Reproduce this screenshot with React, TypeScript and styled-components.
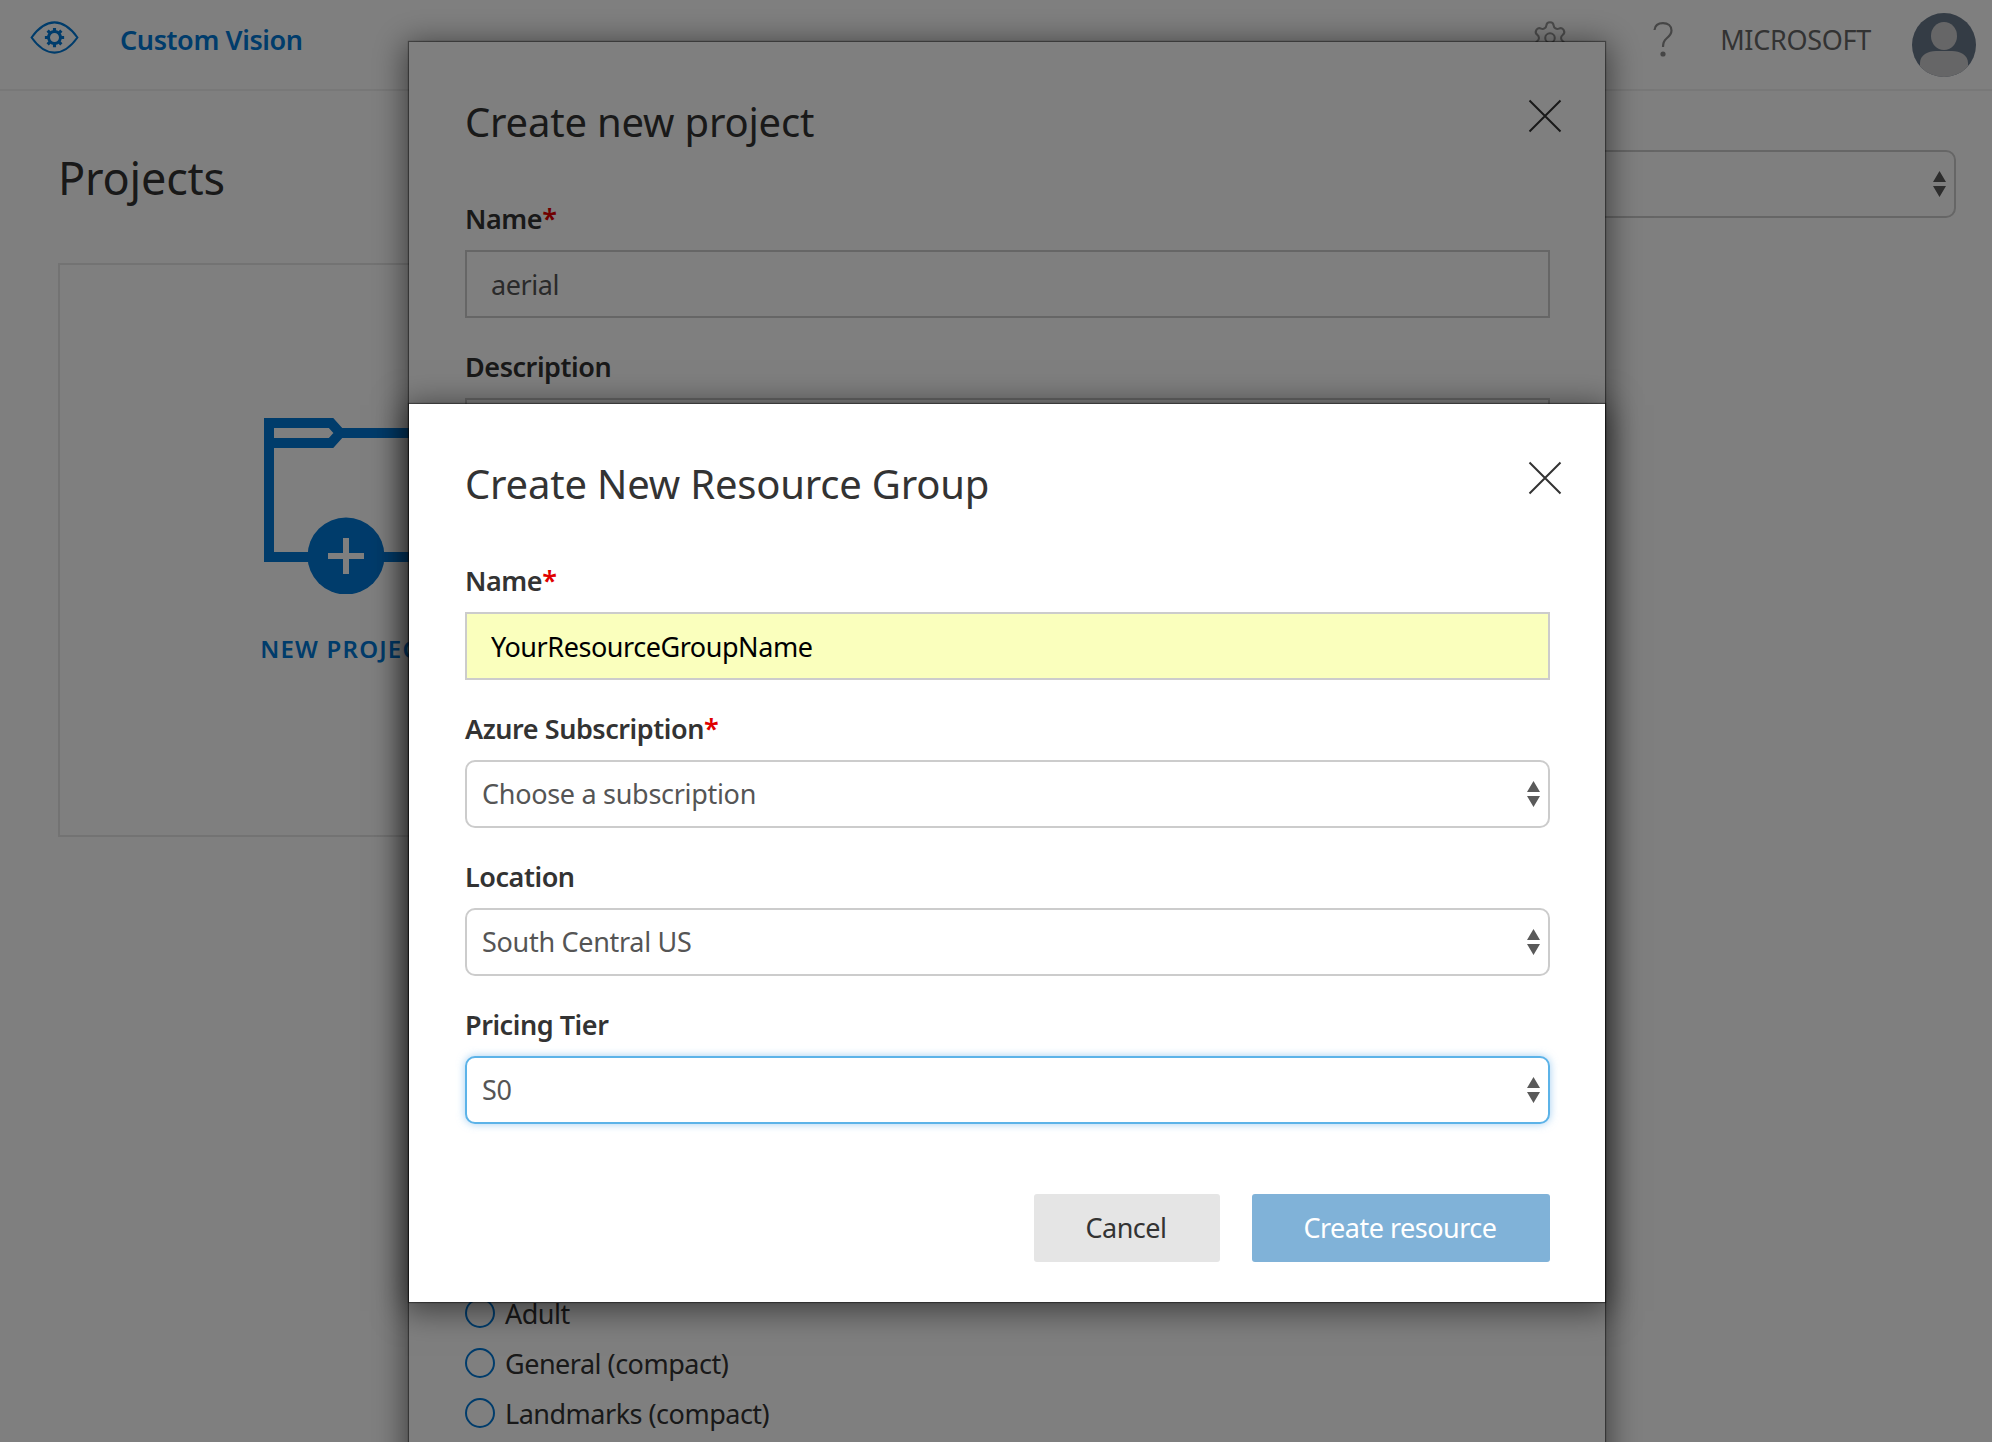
import React from 'react';
import styled, { createGlobalStyle } from 'styled-components';
import { Settings } from 'lucide-react';

const GlobalStyle = createGlobalStyle`
  html, body {
    margin: 0;
    padding: 0;
    background: #fff;
  }
  * {
    box-sizing: border-box;
  }
  body {
    font-family: "Noto Sans", "Open Sans", sans-serif;
    color: #333;
  }
`;

const Page = styled.div`
  position: relative;
  width: 1992px;
  height: 1442px;
  overflow: hidden;
  background: #fff;
`;

// 상단 바
const Header = styled.header`
  height: 91px;
  display: flex;
  align-items: center;
  padding: 0 16px 0 29px;
  border-bottom: 2px solid #f0f0f0;
`;
const LogoSlot = styled.div`
  display: flex;
  margin-bottom: 15px;
`;
const Brand = styled.div`
  font-size: 27px;
  font-weight: 600;
  color: #0078d7;
  margin: 0 0 10px 40px;
  letter-spacing: -0.4px;
  flex: 1;
`;
const GearSlot = styled.div`
  display: flex;
  color: #999;
  margin: 0 84px 13px 0;
`;
const HelpSlot = styled.div`
  display: flex;
  margin-bottom: 9px;
`;
const UserName = styled.div`
  font-size: 27px;
  color: #666;
  margin: 0 41px 10px 47px;
  letter-spacing: -0.3px;
`;

const Main = styled.main`
  padding: 0 36px 0 58px;
`;
const TitleRow = styled.div`
  display: flex;
  justify-content: space-between;
  align-items: center;
  height: 172px;
`;
const PageTitle = styled.h1`
  margin: 1px 0 0;
  font-size: 45px;
  font-weight: 400;
  color: #333;
  letter-spacing: -0.2px;
`;
const ToolbarSelect = styled.div`
  position: relative;
  width: 500px;
  margin-top: 14px;
`;
const Card = styled.div`
  width: 578px;
  height: 574px;
  border: 2px solid #e6e6e6;
  display: flex;
  flex-direction: column;
  align-items: center;
  padding-top: 153px;
`;
const CardLabel = styled.div`
  margin-top: 38px;
  font-size: 24px;
  font-weight: 600;
  letter-spacing: 1.2px;
  color: #0078d7;
  white-space: nowrap;
`;

// 모달 레이어
const ModalLayer = styled.div<{ $top: number }>`
  position: absolute;
  inset: 0;
  display: flex;
  align-items: flex-start;
  padding: ${props => props.$top}px 0 0 409px;
`;
const Backdrop = styled.div`
  position: absolute;
  inset: 0;
  background: rgba(0, 0, 0, 0.5);
`;
const Modal = styled.section<{ $bottomPad: number }>`
  position: relative;
  width: 1196px;
  flex: none;
  background: #fff;
  padding: 50px 55px ${props => props.$bottomPad}px 56px;
  box-shadow: 0 0 1px 1px rgba(0, 0, 0, 0.4), 0 5px 30px 4px rgba(0, 0, 0, 0.5);
`;
const ModalTitle = styled.h2`
  margin: 0 0 47px;
  font-size: 40px;
  line-height: 60px;
  font-weight: 400;
  color: #333;
  letter-spacing: -0.2px;
`;
const CloseButton = styled.button`
  position: absolute;
  top: 57px;
  right: 43px;
  width: 34px;
  height: 34px;
  padding: 0;
  border: none;
  background: none;
  color: #333;
  display: flex;
`;
const Field = styled.div`
  margin-bottom: 29px;
`;
const Label = styled.label`
  display: block;
  font-size: 27px;
  line-height: 40px;
  font-weight: 600;
  color: #333;
  margin-bottom: 11px;
  letter-spacing: -0.45px;
`;
const Required = styled.span`
  color: #e00000;
`;
const TextInput = styled.input<{ $filled?: boolean }>`
  display: block;
  width: 100%;
  height: 68px;
  padding: 1px 24px 0;
  border: 2px solid #ccc;
  border-radius: 0;
  outline: none;
  background: ${props => props.$filled ? '#faffbd' : '#fff'};
  color: ${props => props.$filled ? '#000' : '#555'};
  font-family: inherit;
  font-size: 27px;
  letter-spacing: -0.45px;
`;
const TextArea = styled.div`
  height: 90px;
  border: 2px solid #ccc;
`;
const SelectWrap = styled.div`
  position: relative;
`;
const Select = styled.select<{ $focused?: boolean }>`
  display: block;
  width: 100%;
  height: 68px;
  padding: 0 15px 2px;
  appearance: none;
  background: #fff;
  border: 2px solid ${props => props.$focused ? '#5cb3e8' : '#ccc'};
  border-radius: 10px;
  outline: none;
  box-shadow: ${props => props.$focused ? '0 0 8px rgba(102, 175, 233, 0.6)' : 'none'};
  color: #555;
  font-family: inherit;
  font-size: 27px;
  letter-spacing: -0.3px;
`;
const ArrowSlot = styled.span`
  position: absolute;
  top: 21px;
  right: 10px;
  display: flex;
  pointer-events: none;
`;
const Footer = styled.div`
  display: flex;
  justify-content: flex-end;
  gap: 32px;
  margin-top: 70px;
`;
const Button = styled.button<{ $primary?: boolean }>`
  height: 68px;
  width: ${props => props.$primary ? '298px' : '186px'};
  padding: 0 2px 2px 0;
  border: none;
  border-radius: 3px;
  background: ${props => props.$primary ? '#80b2d8' : '#e5e5e5'};
  color: ${props => props.$primary ? '#fff' : '#333'};
  font-family: inherit;
  font-size: 27px;
  letter-spacing: -0.5px;
`;
const RadioList = styled.div`
  display: flex;
  flex-direction: column;
  gap: 10px;
  margin-top: 805px;
`;
const RadioRow = styled.div`
  display: flex;
  align-items: center;
  height: 40px;
  gap: 10px;
  font-size: 27px;
  color: #333;
  letter-spacing: -0.5px;
`;
const RadioDot = styled.span`
  width: 30px;
  height: 30px;
  border: 2px solid #0078d7;
  border-radius: 50%;
`;

const Updown = () => (
  <svg width="13" height="26" viewBox="0 0 13 26">
    <path d="M6.5 0 L13 11 H0 Z M0 15 H13 L6.5 26 Z" fill="#5a5a5a" />
  </svg>
);

const CloseIcon = () => (
  <svg width="34" height="34" viewBox="0 0 34 34">
    <path d="M1.5 1.5 L32.5 32.5 M32.5 1.5 L1.5 32.5" stroke="currentColor" strokeWidth="2" fill="none" />
  </svg>
);

const EyeLogo = () => (
  <svg width="51" height="33" viewBox="0 0 53 36" fill="none" stroke="#0078d7">
    <path d="M1.5 18 C10 6 18 1.5 26.5 1.5 C35 1.5 43 6 51.5 18 C43 30 35 34.5 26.5 34.5 C18 34.5 10 30 1.5 18 Z" strokeWidth="2.2" />
    <circle cx="26.5" cy="18" r="6.5" strokeWidth="3.2" />
    <path d="M26.5 7.5 V11 M26.5 25 V28.5 M16 18 H19.5 M33.5 18 H37 M19 10.5 L21.5 13 M31.5 23 L34 25.5 M34 10.5 L31.5 13 M21.5 23 L19 25.5" strokeWidth="3.4" />
  </svg>
);

const HelpIcon = () => (
  <svg width="20" height="36" viewBox="0 0 20 36" fill="none">
    <path d="M1.5 8 C2 3.5 5.5 1.2 10 1.2 C15 1.2 18.5 4 18.5 8.5 C18.5 12.5 16 14.5 13.5 16.5 C11 18.5 10 20 10 25" stroke="#8c8c8c" strokeWidth="2.2" />
    <circle cx="10" cy="32" r="2.6" fill="#8c8c8c" />
  </svg>
);

const Avatar = () => (
  <svg width="64" height="64" viewBox="0 0 64 64">
    <defs>
      <clipPath id="avatarClip">
        <circle cx="32" cy="32" r="32" />
      </clipPath>
    </defs>
    <g clipPath="url(#avatarClip)">
      <rect width="64" height="64" fill="#68788a" />
      <ellipse cx="32" cy="23" rx="13" ry="14" fill="#cdcdcf" />
      <path d="M8 64 V50 C8 42 16 38 24 38 H40 C48 38 56 42 56 50 V64 Z" fill="#cdcdcf" />
    </g>
  </svg>
);

const FolderIcon = () => (
  <svg width="166" height="176" viewBox="0 0 166 176" fill="none">
    <path d="M5 25 H67 L76 15 L67 5 H5 Z" stroke="#0078d7" strokeWidth="10" />
    <path d="M5 25 V139 H161 V15 H76" stroke="#0078d7" strokeWidth="10" />
    <circle cx="82" cy="138" r="38.5" fill="#0078d7" />
    <path d="M64 138 H100 M82 120 V156" stroke="#fff" strokeWidth="6" />
  </svg>
);

const SelectField = ({ value, focused }: { value: string; focused?: boolean }) => (
  <SelectWrap>
    <Select $focused={focused} defaultValue={value}>
      <option>{value}</option>
    </Select>
    <ArrowSlot><Updown /></ArrowSlot>
  </SelectWrap>
);

const App = () => {
  return (
    <Page>
      <GlobalStyle />
      <Header>
        <LogoSlot><EyeLogo /></LogoSlot>
        <Brand>Custom Vision</Brand>
        <GearSlot><Settings size={38} strokeWidth={1.3} /></GearSlot>
        <HelpSlot><HelpIcon /></HelpSlot>
        <UserName>MICROSOFT</UserName>
        <Avatar />
      </Header>
      <Main>
        <TitleRow>
          <PageTitle>Projects</PageTitle>
          <ToolbarSelect>
            <Select />
            <ArrowSlot><Updown /></ArrowSlot>
          </ToolbarSelect>
        </TitleRow>
        <Card>
          <FolderIcon />
          <CardLabel>NEW PROJECT</CardLabel>
        </Card>
      </Main>

      <ModalLayer $top={42}>
        <Modal $bottomPad={40}>
          <ModalTitle>Create new project</ModalTitle>
          <CloseButton><CloseIcon /></CloseButton>
          <Field>
            <Label>Name<Required>*</Required></Label>
            <TextInput defaultValue="aerial" />
          </Field>
          <Field>
            <Label>Description</Label>
            <TextArea />
          </Field>
          <RadioList>
            <RadioRow><RadioDot />Adult</RadioRow>
            <RadioRow><RadioDot />General (compact)</RadioRow>
            <RadioRow><RadioDot />Landmarks (compact)</RadioRow>
          </RadioList>
        </Modal>
      </ModalLayer>

      <Backdrop />

      <ModalLayer $top={404}>
        <Modal $bottomPad={40}>
          <ModalTitle>Create New Resource Group</ModalTitle>
          <CloseButton><CloseIcon /></CloseButton>
          <Field>
            <Label>Name<Required>*</Required></Label>
            <TextInput $filled defaultValue="YourResourceGroupName" />
          </Field>
          <Field>
            <Label>Azure Subscription<Required>*</Required></Label>
            <SelectField value="Choose a subscription" />
          </Field>
          <Field>
            <Label>Location</Label>
            <SelectField value="South Central US" />
          </Field>
          <Field>
            <Label>Pricing Tier</Label>
            <SelectField value="S0" focused />
          </Field>
          <Footer>
            <Button>Cancel</Button>
            <Button $primary>Create resource</Button>
          </Footer>
        </Modal>
      </ModalLayer>
    </Page>
  );
};

export default App;
